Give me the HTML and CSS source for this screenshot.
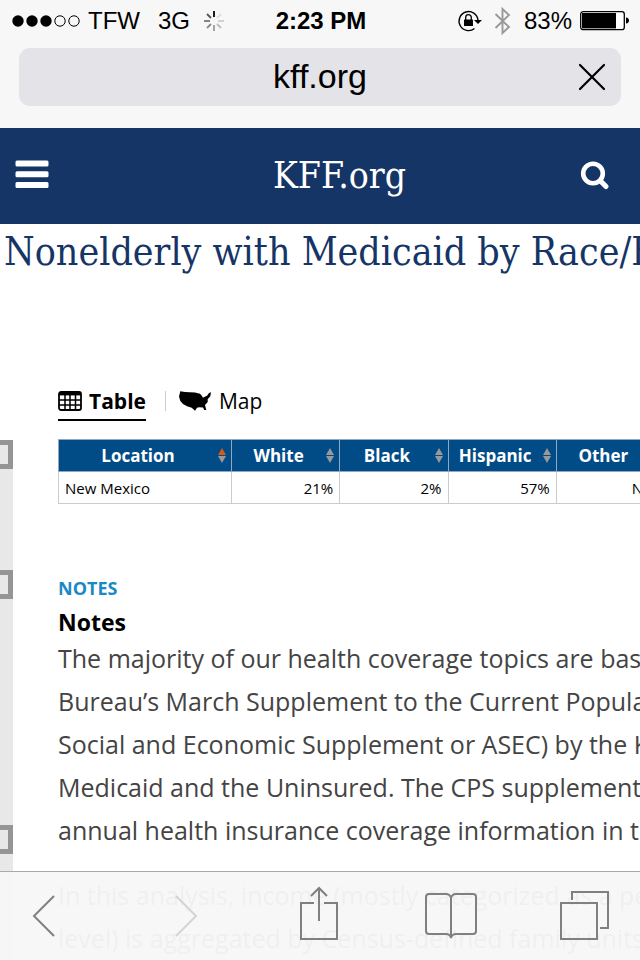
FILE: index.html
```html
<!DOCTYPE html>
<html lang="en">
    <head>
        <meta charset="UTF-8" />
        <meta name="viewport" content="width=device-width, initial-scale=1.0" />
        <title>KFF.org</title>
        <link rel="stylesheet" href="styles.css">
    </head>
    <body>
        <div class="browser">
            <div class="status">
                <div class="status-left">
                    <svg class="signal" width="68" height="12" viewBox="0 0 68 12">
                        <circle cx="6" cy="6" r="5.7" />
                        <circle cx="20" cy="6" r="5.7" />
                        <circle cx="34" cy="6" r="5.7" />
                        <circle class="empty" cx="48" cy="6" r="5.2" />
                        <circle class="empty" cx="62" cy="6" r="5.2" />
                    </svg>
                    <span class="carrier">TFW</span>
                    <span class="network">3G</span>
                    <svg width="20" height="20" viewBox="-10 -10 20 20" stroke-width="1.8">
                        <path d="M0-4V-10" stroke="#000" />
                        <path d="M3-3L7-7" stroke="#ddd" />
                        <path d="M4 0H10" stroke="#ccc" />
                        <path d="M3 3L7 7" stroke="#bbb" />
                        <path d="M0 4V10" stroke="#999" />
                        <path d="M-3 3L-7 7" stroke="#888" />
                        <path d="M-4 0H-10" stroke="#777" />
                        <path d="M-3-3L-7-7" stroke="#555" />
                    </svg>
                </div>
                <strong class="time">2:23 PM</strong>
                <div class="status-right">
                    <svg width="24" height="22" viewBox="0 0 24 22">
                        <path d="M20 10A9.5 9.5 0 1 0 16.5 18.5" fill="none" stroke="#000" stroke-width="1.4" />
                        <path d="M16 10H24L20 14Z" />
                        <rect x="6" y="9.5" width="9" height="6.5" rx="0.5" />
                        <path d="M7.7 10V7.5a2.8 2.8 0 0 1 5.6 0V10" fill="none" stroke="#000" stroke-width="1.3" />
                    </svg>
                    <svg class="bluetooth" width="18" height="28" viewBox="0 0 18 28">
                        <path d="M1.5 7L15 20L8.5 26V2L15 8L1.5 21" fill="none" stroke="#999" stroke-width="1.9" />
                    </svg>
                    <span>83%</span>
                    <svg class="battery" width="50" height="20" viewBox="0 0 50 20">
                        <rect x="0.7" y="0.7" width="43.6" height="18" rx="2.5" fill="#fff" stroke="#000" stroke-width="1.3" />
                        <rect x="2" y="2" width="34" height="15.4" />
                        <path d="M46 6.5c4 0 4 6 0 6z" />
                    </svg>
                </div>
            </div>
            <div class="address">
                <span class="url">kff.org</span>
                <button class="stop" aria-label="Stop loading">
                    <svg width="28" height="28" viewBox="0 0 28 28">
                        <path d="M2 2L26 26M26 2L2 26" fill="none" stroke="#000" stroke-width="2.2" stroke-linecap="round" />
                    </svg>
                </button>
            </div>
        </div>

        <header class="site-header">
            <button aria-label="Menu">
                <svg width="34" height="32" viewBox="0 0 34 32" fill="#fff">
                    <rect x="0.5" y="0.5" width="33" height="6" rx="1.5" />
                    <rect x="0.5" y="11.3" width="33" height="6" rx="1.5" />
                    <rect x="0.5" y="22" width="33" height="6" rx="1.5" />
                </svg>
            </button>
            <a class="brand" href="#">KFF.org</a>
            <button aria-label="Search">
                <svg width="30" height="30" viewBox="0 0 30 30" fill="none" stroke="#fff">
                    <circle cx="13" cy="12.5" r="9.8" stroke-width="4.6" />
                    <path d="M20.5 20L26 25.5" stroke-width="5.2" stroke-linecap="round" />
                </svg>
            </button>
        </header>

        <h1>Nonelderly with Medicaid by Race/Ethnicity</h1>

        <div class="page">
            <aside class="options">
                <span class="option"></span>
                <span class="option"></span>
                <span class="option"></span>
            </aside>
            <main class="content">
                <nav class="tabs">
                    <a class="tab active" href="#">
                        <svg width="24" height="20" viewBox="0 0 24 20">
                            <rect x="1" y="1" width="22" height="18" rx="2" fill="none" stroke="#000" stroke-width="1.8" />
                            <path d="M1 9H23M1 14H23M7 4V19M12 4V19M17.5 4V19" stroke="#000" stroke-width="1.5" />
                            <rect x="1" y="1" width="22" height="3.4" />
                        </svg>
                        Table
                    </a>
                    <a class="tab" href="#">
                        <svg width="33" height="20" viewBox="0 0 33 20">
                            <path d="M1.3 0.3L6 1L16 1.5L21 2.7L23 5L24 6.7L25.3 6L28 4.7L30 2L32 1.3L31.3 5.3L28.7 8.3V11L26 14L27.3 19L25.3 19L24 16.5L20 16.3L18 16.7L16 19.7L12.7 16.7L8 15.3L4 13L1.3 10L0 5.5Z" />
                        </svg>
                        Map
                    </a>
                </nav>

                <table>
                    <thead>
                        <tr>
                            <th class="location">Location <span class="sort sorted"></span></th>
                            <th>White <span class="sort"></span></th>
                            <th>Black <span class="sort"></span></th>
                            <th>Hispanic <span class="sort"></span></th>
                            <th>Other <span class="sort"></span></th>
                        </tr>
                    </thead>
                    <tbody>
                        <tr>
                            <td>New Mexico</td>
                            <td>21%</td>
                            <td>2%</td>
                            <td>57%</td>
                            <td>N/A</td>
                        </tr>
                    </tbody>
                </table>

                <h2>NOTES</h2>
                <h3>Notes</h3>
                <p>
                    The majority of our health coverage topics are based<br>
                    Bureau’s March Supplement to the Current Population<br>
                    Social and Economic Supplement or ASEC) by the Kaiser<br>
                    Medicaid and the Uninsured. The CPS supplement is<br>
                    annual health insurance coverage information in the
                </p>
                <p>
                    In this analysis, income (mostly categorized as a percent<br>
                    level) is aggregated by Census-defined family units
                </p>
            </main>
        </div>

        <div class="toolbar">
            <button aria-label="Back">
                <svg width="52" height="52" viewBox="0 0 52 52">
                    <path d="M37 6L17 26L37 46" />
                </svg>
            </button>
            <button class="disabled" aria-label="Forward">
                <svg width="52" height="52" viewBox="0 0 52 52">
                    <path d="M24 6L44 26L24 46" />
                </svg>
            </button>
            <button aria-label="Share">
                <svg width="52" height="52" viewBox="0 0 52 52">
                    <path d="M28 13H15V49H51V13H38M33 31V-2M25 6L33-2L41 6" />
                </svg>
            </button>
            <button aria-label="Bookmarks">
                <svg width="56" height="52" viewBox="0 0 56 52">
                    <path d="M30 8Q29 4 25 4H8Q5 4 5 7V41Q5 44 8 44H25Q29 44 30 48Q31 44 35 44H52Q55 44 55 41V7Q55 4 52 4H35Q31 4 30 8V48" />
                </svg>
            </button>
            <button aria-label="Tabs">
                <svg width="52" height="52" viewBox="0 0 52 52">
                    <path d="M2 13H38V49H2ZM13 10V2H49V38H41" />
                </svg>
            </button>
        </div>
    </body>
</html>
```
FILE: styles.css
```css
* {
    box-sizing: border-box;
}

body {
    margin: 0;
    height: 100vh;
    overflow: hidden;
    background: #fff;
    color: #000;
    font-family: "Open Sans", "Noto Sans", sans-serif;
}

button {
    display: flex;
    padding: 0;
    border: 0;
    background: none;
}

a {
    color: inherit;
    text-decoration: none;
}

svg {
    display: block;
    flex: none;
    overflow: visible;
}

/* Phone status bar and address field */
.browser {
    height: 128px;
    background: #f7f7f7;
    font-family: "Liberation Sans", sans-serif;
}

.status {
    display: grid;
    grid-template-columns: 1fr auto 1fr;
    align-items: center;
    height: 41px;
    padding: 0 10px 0 12px;
    font-size: 24px;
}

.status-left,
.status-right {
    display: flex;
    align-items: center;
}

.status-right {
    justify-content: flex-end;
    gap: 12px;
}

.signal .empty {
    fill: none;
    stroke: #000;
}

.carrier {
    margin-left: 8px;
}

.network {
    margin: 0 14px 0 18px;
}

.battery {
    margin-left: -4px;
}

.address {
    display: grid;
    grid-template-columns: 1fr auto 1fr;
    align-items: center;
    height: 58px;
    margin: 7px 19px 0;
    padding: 0 15px;
    border-radius: 11px;
    background: #e4e3e8;
}

.url {
    grid-column: 2;
    padding-bottom: 2px;
    font-size: 34px;
}

.stop {
    justify-self: end;
}

/* Site header */
.site-header {
    display: flex;
    align-items: center;
    height: 96px;
    padding: 0 30px 0 15px;
    background: #163567;
}

.brand {
    flex: 1;
    padding-left: 50px;
    color: #fff;
    font-family: "DejaVu Serif Condensed", "DejaVu Serif", serif;
    font-size: 37px;
    line-height: 40px;
    text-align: center;
}

h1 {
    margin: 0;
    padding-left: 4px;
    color: #163567;
    font-family: "DejaVu Serif Condensed", "DejaVu Serif", serif;
    font-size: 39px;
    font-weight: normal;
    line-height: 56px;
    white-space: nowrap;
}

.page {
    display: flex;
    margin-top: 104px;
}

/* Edge of the options column */
.options {
    display: flex;
    flex: none;
    flex-direction: column;
    width: 13px;
    margin-top: 56px;
    background: #e8e8e8;
}

.option {
    height: 29px;
    border: solid #959595;
    border-width: 5px 5px 5px 0;
}

.option:nth-child(2) {
    margin-top: 101px;
}

.option:nth-child(3) {
    margin-top: 226px;
}

.content {
    flex: 1;
    min-width: 0;
    padding-left: 45px;
}

.tabs {
    display: flex;
    font-size: 21px;
}

.tab {
    display: flex;
    align-items: center;
    gap: 7px;
    height: 37px;
    padding-bottom: 2px;
    border-bottom: 2px solid transparent;
}

.tab + .tab {
    margin-left: 33px;
}

.tab.active {
    position: relative;
    border-color: #000;
    font-weight: bold;
}

.tab.active::after {
    content: "";
    position: absolute;
    top: 7px;
    right: -20px;
    width: 1px;
    height: 20px;
    background: #ccc;
}

table {
    width: 607px;
    margin-top: 18px;
    border-collapse: collapse;
    table-layout: fixed;
}

th,
td {
    height: 32px;
    padding: 0 6px;
    border: 1px solid #ccc;
    white-space: nowrap;
}

th {
    position: relative;
    padding-right: 20px;
    border-color: #8fa9c4;
    background: #014c86;
    color: #fff;
    font-size: 17px;
}

th.location {
    width: 173px;
}

td {
    font-size: 15px;
    text-align: right;
}

td:first-child {
    text-align: left;
}

/* Sort arrows */
.sort::before,
.sort::after {
    content: "";
    position: absolute;
    right: 5px;
    border: solid transparent;
    border-width: 0 4px;
}

.sort::before {
    top: 8px;
    border-bottom: 7px solid #999;
}

.sort::after {
    top: 16px;
    border-top: 7px solid #999;
}

.sorted::before {
    border-bottom-color: #d95b13;
}

h2 {
    margin: 65px 0 0;
    color: #1a8ac6;
    font-size: 18px;
    line-height: 38px;
}

h3 {
    margin: 0;
    font-size: 23px;
    line-height: 30px;
}

p {
    margin: 0 0 22px;
    color: #444;
    font-size: 25px;
    line-height: 43px;
    white-space: nowrap;
}

/* Browser toolbar */
.toolbar {
    position: fixed;
    right: 0;
    bottom: 0;
    left: 0;
    display: flex;
    align-items: center;
    justify-content: space-between;
    height: 89px;
    padding: 0 29px 0 17px;
    border-top: 1px solid #aaa;
    background: rgba(247, 247, 247, 0.96);
}

.toolbar svg {
    fill: none;
    stroke: #808080;
    stroke-width: 2;
}

.toolbar .disabled svg {
    stroke: #d4d4d4;
}
```
